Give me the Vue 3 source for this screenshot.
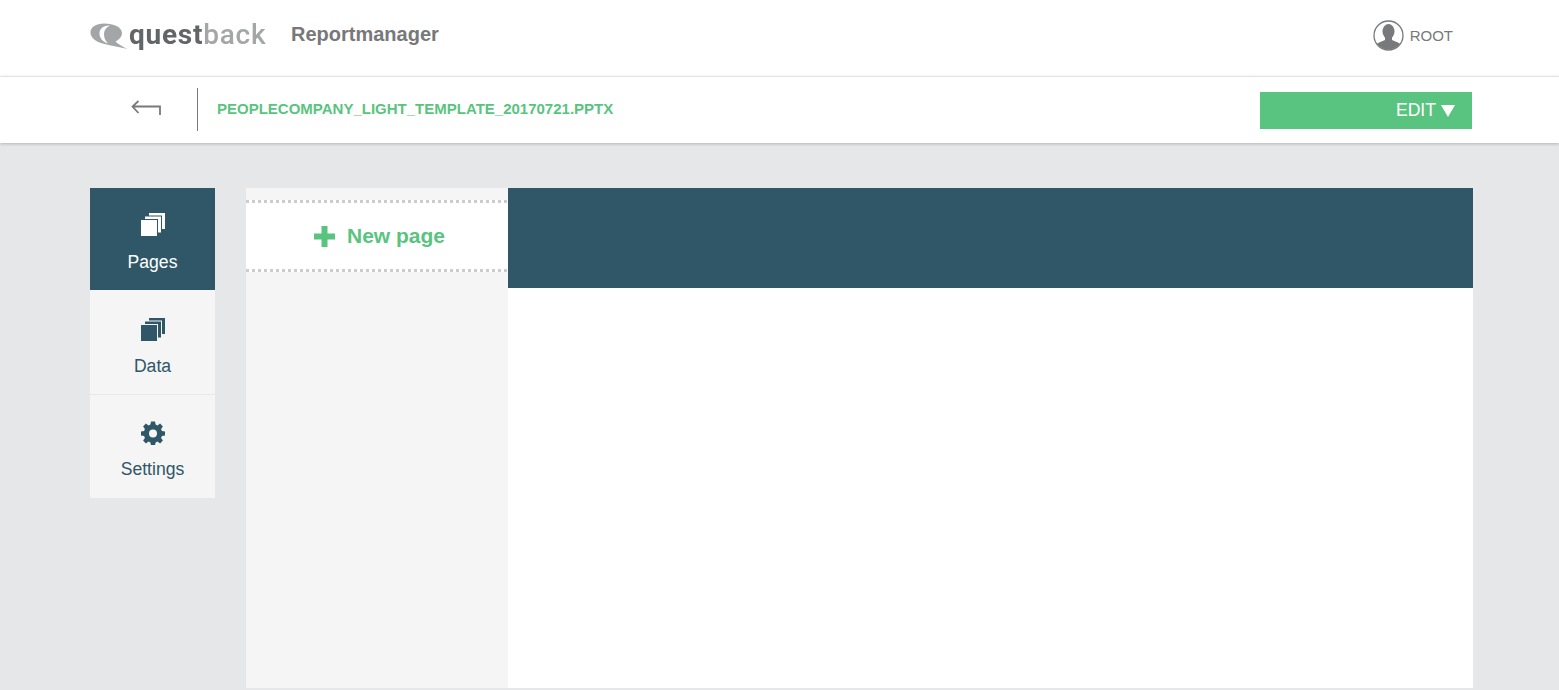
<script setup>
const tabs = [
  { name: 'Pages', cls: 'on', icon: 'stack' },
  { name: 'Data', cls: 'data', icon: 'stack' },
  { name: 'Settings', cls: 'settings', icon: 'gear' }
]
</script>

<template>
  <div class="page">
    <header class="top">
      <div class="brand">
        <svg class="bubble" width="38" height="27" viewBox="0 0 38 27">
          <path d="M14 .5C6 .5 .5 4 .5 9.500c0 5.500 6 9.500 12 11 8 2 16 3.500 25 5.500-5-2.500-9.500-5-12-7.500 4-2 6.500-5 6.500-8.500C31.500 4 24 .5 14 .5Z" fill="#a3a5a6" />
          <path d="M20 2.500C13 2 9.500 6 9.500 10.500c0 4.500 3 8 8.500 10-2.800-2.800-4.200-6-4-10 .2-3.500 2.500-6.500 6-8Z" fill="#fff" />
        </svg>
        <span class="logo"><b>quest</b><span>back</span></span>
        <span class="product">Reportmanager</span>
      </div>
      <div class="user">
        <svg width="31" height="31" viewBox="0 0 31 31">
          <defs><clipPath id="avatar"><circle cx="15.500" cy="15.500" r="14" /></clipPath></defs>
          <circle cx="15.500" cy="15.500" r="14.500" fill="#fff" stroke="#77797b" stroke-width="1.300" />
          <g clip-path="url(#avatar)" fill="#77797b">
            <ellipse cx="15.500" cy="11.500" rx="6" ry="7.500" />
            <path d="M12 17h7v3l7 3c2 1 3 3 3 8H2c0-5 1-7 3-8l7-3Z" />
          </g>
        </svg>
        <span>ROOT</span>
      </div>
    </header>

    <div class="bar">
      <div class="bar-left">
        <button class="back" aria-label="Back">
          <svg width="30" height="16" viewBox="0 0 30 16" fill="none" stroke="#77797b" stroke-width="1.800">
            <path d="M7.500 1 1.500 6.500 7.500 13M1.500 6.500H29V15" />
          </svg>
        </button>
        <span class="file">PEOPLECOMPANY_LIGHT_TEMPLATE_20170721.PPTX</span>
      </div>
      <button class="edit">EDIT <i class="tri"></i></button>
    </div>

    <main class="main">
      <nav class="side">
        <a v-for="t in tabs" :key="t.name" class="tab" :class="t.cls">
          <svg v-if="t.icon === 'stack'" class="ico" width="24" height="25" viewBox="0 0 24 25">
            <g :fill="t.cls === 'on' ? '#fff' : '#305767'" :stroke="t.cls === 'on' ? '#305767' : '#f5f5f5'" stroke-width="1">
              <rect x="8" y="0" width="16" height="16" stroke="none" />
              <rect x="3.500" y="3" width="17" height="17" />
              <rect x="-.5" y="6.500" width="17" height="17" />
            </g>
          </svg>
          <svg v-else class="ico" width="24" height="24" viewBox="0 0 24 24">
            <path fill="#305767" fill-rule="evenodd" d="M10 .5h4l.6 3.100 1.900.8 2.600-1.800 2.800 2.800-1.800 2.600.8 1.900 3.100.6v4l-3.100.6-.8 1.900 1.800 2.600-2.800 2.800-2.600-1.800-1.900.8-.6 3.100h-4l-.6-3.100-1.900-.8-2.600 1.800-2.800-2.800 1.800-2.600-.8-1.900L0 14.500v-4l3.100-.6.800-1.900-1.800-2.600 2.800-2.800 2.600 1.800 1.900-.8ZM12 8.500a4 4 0 1 0 0 8 4 4 0 0 0 0-8Z" />
          </svg>
          <span>{{ t.name }}</span>
        </a>
      </nav>

      <section class="panel">
        <div class="new">
          <svg width="21" height="21" viewBox="0 0 21 21"><path fill="#59c480" d="M7.500 0h6v7.500H21v6h-7.500V21h-6v-7.500H0v-6h7.500Z" /></svg>
          <span>New page</span>
        </div>
      </section>

      <section class="content">
        <div class="banner"></div>
      </section>
    </main>
  </div>
</template>

<style>
html, body { margin: 0; background: #e6e7e9; }
</style>

<style scoped>
.page {
  width: 1559px;
  height: 690px;
  overflow: hidden;
  font-family: "Liberation Sans", Arial, sans-serif;
  background: #e6e7e9;
}
.top {
  height: 76px;
  box-sizing: border-box;
  padding: 0 106px 8px 90px;
  background: #fff;
  display: flex;
  align-items: center;
  justify-content: space-between;
}
.brand { display: flex; align-items: center; }
.bubble { margin-top: 4px; filter: blur(0.3px); }
.logo {
  font-family: Roboto, sans-serif;
  font-size: 28px;
  line-height: 30px;
  margin-left: 1px;
  letter-spacing: 0.75px;
  color: #a4a6a8;
  width: 162px;
  margin-top: 2px;
  font-weight: 500;
  filter: blur(0.3px);
}
.logo b { color: #636567; font-weight: 700; }
.product { font-size: 20px; font-weight: 700; color: #77787a; }
.user { display: flex; align-items: center; gap: 6px; font-size: 15px; color: #77797b; margin-top: 3px; }
.bar {
  height: 67px;
  box-sizing: border-box;
  border-top: 1px solid #e4e4e4;
  background: #fff;
  box-shadow: 0 1px 3px rgba(0, 0, 0, 0.22);
  padding: 0 87px 0 0;
  display: flex;
  align-items: center;
  justify-content: space-between;
  position: relative;
}
.bar-left { display: flex; align-items: center; height: 43px; margin-top: -1px; }
.back {
  width: 198px;
  height: 43px;
  box-sizing: border-box;
  padding: 0 0 3px 131px;
  border: 0;
  border-right: 1px solid #77797b;
  background: none;
  text-align: left;
  display: flex;
  align-items: center;
}
.file { margin-left: 19px; font-size: 15px; font-weight: 700; color: #59c480; margin-top: -2px; }
.edit {
  width: 212px;
  height: 37px;
  border: 0;
  background: #59c480;
  color: #fff;
  font-family: inherit;
  font-size: 17.600px;
  display: flex;
  align-items: center;
  justify-content: flex-end;
  gap: 5px;
  padding: 0 17px 0 0;
  margin-top: 1px;
}
.tri {
  width: 0;
  height: 0;
  border-left: 7px solid transparent;
  border-right: 7px solid transparent;
  border-top: 12px solid #fff;
}
.main {
  display: flex;
  align-items: flex-start;
  padding: 45px 86px 0 90px;
  height: 547px;
  box-sizing: border-box;
}
.side { width: 125px; margin-right: 31px; background: #f5f5f5; }
.tab {
  box-sizing: border-box;
  display: flex;
  flex-direction: column;
  align-items: center;
  gap: 14px;
  font-size: 17.600px;
  color: #305767;
  background: #f5f5f5;
}
.tab.on { background: #305767; color: #fff; height: 102px; padding-top: 25px; }
.tab.data { height: 104px; padding-top: 28px; gap: 13px; }
.tab.settings { height: 104px; padding-top: 26px; border-top: 1px solid #e8e8e8; gap: 14px; }
.ico { display: block; }
.panel { width: 262px; height: 500px; background: #f5f5f5; padding-top: 12px; box-sizing: border-box; }
.new {
  height: 72px;
  box-sizing: border-box;
  background:
    linear-gradient(90deg, #cccccc 3px, transparent 3px) 0 0 / 6px 3px repeat-x,
    linear-gradient(90deg, #cccccc 3px, transparent 3px) 0 100% / 6px 3px repeat-x,
    #fff;
  display: flex;
  align-items: center;
  justify-content: center;
  gap: 12px;
  font-size: 21px;
  font-weight: 700;
  color: #59c480;
  padding-left: 5px;
}
.content { width: 965px; height: 500px; background: #fff; }
.banner { height: 100px; background: #305767; }
</style>
